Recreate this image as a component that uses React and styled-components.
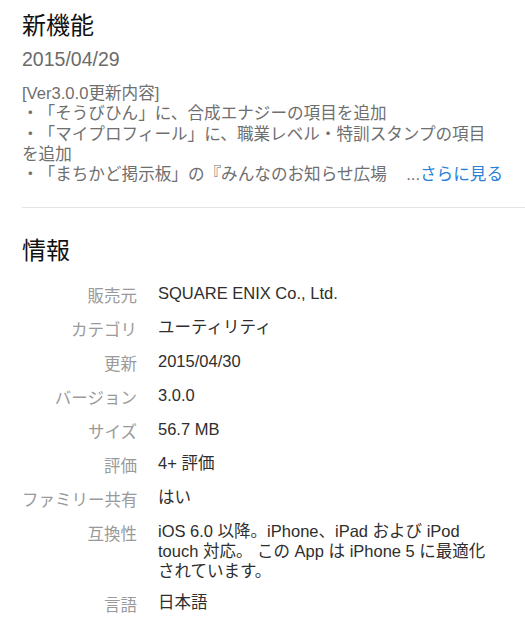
import React from "react";
import styled, { createGlobalStyle } from "styled-components";

const GlobalStyle = createGlobalStyle`
  html, body {
    margin: 0;
    padding: 0;
    background: #fff;
  }
  body {
    font-family: "Liberation Sans", "Noto Sans CJK JP", sans-serif;
    -webkit-font-smoothing: antialiased;
    text-spacing-trim: space-all;
  }
`;

const Page = styled.div`
  width: 525px;
  height: 640px;
  overflow: hidden;
  background: #fff;
`;

const Section = styled.section`
  padding: ${(p) => p.$pad || "0 22px"};
  border-bottom: ${(p) => (p.$divider ? "1px solid #e3e3e3" : "none")};
  margin-left: ${(p) => (p.$divider ? "22px" : "0")};
  padding-left: ${(p) => (p.$divider ? "0" : "22px")};
`;

const Heading = styled.h2`
  margin: 0;
  font-size: 24px;
  font-weight: 400;
  line-height: 30px;
  color: #111;
`;

const DateLine = styled.div`
  margin-top: 5px;
  font-size: 19.5px;
  line-height: 26px;
  color: #6b6b6b;
`;

const Notes = styled.div`
  margin-top: 12px;
  font-size: 16.6px;
  line-height: 20.3px;
  color: #6f6f6f;
  padding-right: 22px;
`;

const NoteLine = styled.div`
  white-space: nowrap;
`;

const LastLine = styled.div`
  display: flex;
  white-space: nowrap;
`;

const Clip = styled.span`
  overflow: hidden;
  flex: 1;
`;

const More = styled.span`
  color: #6f6f6f;
  span {
    color: #2a7fd6;
  }
`;

const InfoList = styled.dl`
  margin: 17px 0 0;
  display: grid;
  grid-template-columns: 115px 1fr;
  column-gap: 21px;
  row-gap: 11px;
  font-size: 16.5px;
  line-height: 20px;
`;

const Label = styled.dt`
  text-align: right;
  color: #9a9a9a;
  white-space: nowrap;
  padding-top: 3px;
`;

const Value = styled.dd`
  margin: 0;
  color: #2e2e2e;
  white-space: nowrap;
`;

const info = [
  ["販売元", "SQUARE ENIX Co., Ltd."],
  ["カテゴリ", "ユーティリティ"],
  ["更新", "2015/04/30"],
  ["バージョン", "3.0.0"],
  ["サイズ", "56.7 MB"],
  ["評価", "4+ 評価"],
  ["ファミリー共有", "はい"],
  [
    "互換性",
    <>
      iOS 6.0 以降。iPhone、iPad および iPod
      <br />
      touch 対応。 この App は iPhone 5 に最適化
      <br />
      されています。
    </>,
  ],
  ["言語", "日本語"],
];

export default function App() {
  return (
    <Page lang="ja">
      <GlobalStyle />
      <Section $divider $pad="11px 0 22px">
        <Heading>新機能</Heading>
        <DateLine>2015/04/29</DateLine>
        <Notes>
          <NoteLine>[Ver3.0.0更新内容]</NoteLine>
          <NoteLine>・「そうびひん」に、合成エナジーの項目を追加</NoteLine>
          <NoteLine>・「マイプロフィール」に、職業レベル・特訓スタンプの項目</NoteLine>
          <NoteLine>を追加</NoteLine>
          <LastLine>
            <Clip>・「まちかど掲示板」の『みんなのお知らせ広場</Clip>
            <More>
              ...<span>さらに見る</span>
            </More>
          </LastLine>
        </Notes>
      </Section>
      <Section $pad="28px 22px 0">
        <Heading>情報</Heading>
        <InfoList>
          {info.map(([k, v]) => (
            <React.Fragment key={k}>
              <Label>{k}</Label>
              <Value>{v}</Value>
            </React.Fragment>
          ))}
        </InfoList>
      </Section>
    </Page>
  );
}
